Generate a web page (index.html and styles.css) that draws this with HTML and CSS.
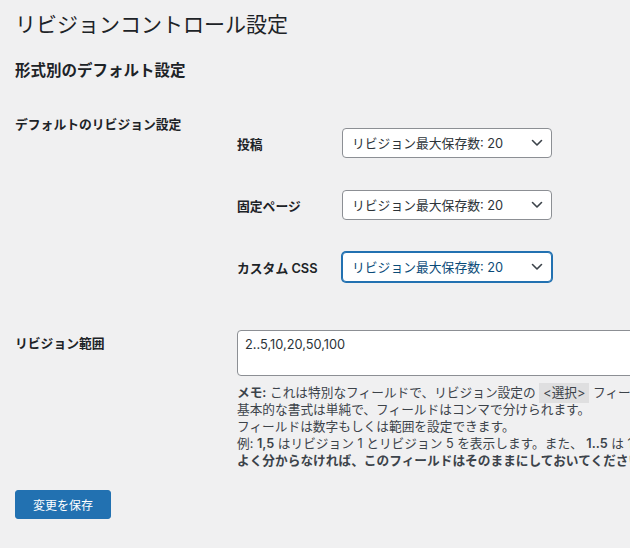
FILE: index.html
```html
<!DOCTYPE html>
<html lang="ja">
<head>
    <meta charset="UTF-8">
    <meta name="viewport" content="width=device-width, initial-scale=1.0">
    <title>リビジョンコントロール設定</title>
    <link rel="stylesheet" href="styles.css">
</head>
<body>

    <div class="wrap">
        <h1>リビジョンコントロール設定</h1>
        <h2>形式別のデフォルト設定</h2>

        <!-- Default revision settings per post type -->
        <div class="form-row defaults">
            <div class="row-label">デフォルトのリビジョン設定</div>
            <div class="type-list">
                <div class="type-row">
                    <div class="type-label">投稿</div>
                    <div class="select-box">
                        <select class="rev-select">
                            <option>リビジョン最大保存数: 20</option>
                        </select>
                        <svg class="chevron" width="12" height="8" viewBox="0 0 12 8"><path d="M1.5 1.5 6 6l4.5-4.5" fill="none" stroke="#3c434a" stroke-width="1.6" stroke-linecap="round" stroke-linejoin="round"/></svg>
                    </div>
                </div>
                <div class="type-row">
                    <div class="type-label">固定ページ</div>
                    <div class="select-box">
                        <select class="rev-select">
                            <option>リビジョン最大保存数: 20</option>
                        </select>
                        <svg class="chevron" width="12" height="8" viewBox="0 0 12 8"><path d="M1.5 1.5 6 6l4.5-4.5" fill="none" stroke="#3c434a" stroke-width="1.6" stroke-linecap="round" stroke-linejoin="round"/></svg>
                    </div>
                </div>
                <div class="type-row">
                    <div class="type-label">カスタム CSS</div>
                    <div class="select-box">
                        <select class="rev-select is-focus">
                            <option>リビジョン最大保存数: 20</option>
                        </select>
                        <svg class="chevron" width="12" height="8" viewBox="0 0 12 8"><path d="M1.5 1.5 6 6l4.5-4.5" fill="none" stroke="#3c434a" stroke-width="1.6" stroke-linecap="round" stroke-linejoin="round"/></svg>
                    </div>
                </div>
            </div>
        </div>

        <!-- Revision range -->
        <div class="form-row range">
            <div class="row-label range-label">リビジョン範囲</div>
            <div class="range-field">
                <textarea class="range-input">2..5,10,20,50,100</textarea>
                <p class="description">
                    <strong>メモ:</strong> これは特別なフィールドで、リビジョン設定の <code>&lt;選択&gt;</code> フィールドに表示される内容を制御します。<br>
                    基本的な書式は単純で、フィールドはコンマで分けられます。<br>
                    フィールドは数字もしくは範囲を設定できます。<br>
                    例: <strong>1,5</strong> はリビジョン 1 とリビジョン 5 を表示します。また、 <strong>1..5</strong> は 1 から 5 までのリビジョンを表示します。<br>
                    <strong>よく分からなければ、このフィールドはそのままにしておいてください。</strong>
                </p>
            </div>
        </div>

        <button class="button-primary">変更を保存</button>
    </div>

</body>
</html>
```

FILE: styles.css
```css
body {
    margin: 0;
    background-color: #f0f0f1;
    color: #1d2327;
    font-family: Inter, "Noto Sans CJK JP", sans-serif;
    font-size: 12px;
    overflow: hidden;
}

.wrap {
    width: 1000px;
    padding-left: 15px;
}

h1 {
    font-size: 21px;
    font-weight: 400;
    line-height: 27px;
    margin: 0;
    padding-top: 11px;
}

h2 {
    font-size: 15.5px;
    font-weight: 600;
    line-height: 20px;
    margin: 23px 0 0;
}

.form-row {
    display: grid;
    grid-template-columns: 222px 1fr;
}

.defaults {
    margin-top: 31px;
}

.row-label {
    font-size: 12.8px;
    font-weight: 600;
    line-height: 18px;
    padding-top: 3.5px;
}

.type-row {
    display: grid;
    grid-template-columns: 105px 210px;
    align-items: center;
    height: 62px;
}

.type-label {
    font-size: 12.8px;
    font-weight: 600;
}

.select-box {
    position: relative;
    height: 30px;
}

.rev-select {
    appearance: none;
    -webkit-appearance: none;
    width: 210px;
    height: 30px;
    padding: 0 24px 0 9px;
    border: 1px solid #8c8f94;
    border-radius: 4px;
    background-color: #fff;
    color: #2c3338;
    font-family: Inter, "Noto Sans CJK JP", sans-serif;
    font-size: 12.8px;
}

.rev-select.is-focus {
    border-color: #2271b1;
    box-shadow: 0 0 0 1px #2271b1;
    color: #0a4b78;
}

.chevron {
    position: absolute;
    right: 9px;
    top: 11px;
    pointer-events: none;
}

.range {
    margin-top: 32px;
}

.range-label {
    padding-top: 5px;
}

.range-input {
    display: block;
    box-sizing: border-box;
    width: 100%;
    height: 46px;
    margin: 0;
    padding: 5px 7px;
    border: 1px solid #8c8f94;
    border-radius: 4px;
    background-color: #fff;
    color: #2c3338;
    font-family: Inter, "Noto Sans CJK JP", sans-serif;
    font-size: 12.8px;
    line-height: 17px;
    resize: none;
}

.description {
    margin: 7.5px 0 0;
    color: #3c434a;
    font-size: 12.7px;
    line-height: 17px;
    white-space: nowrap;
}

.description strong {
    font-weight: 600;
}

.description code {
    background-color: rgba(0, 0, 0, 0.07);
    padding: 2px 4px 3px;
    font-family: Inter, "Noto Sans CJK JP", sans-serif;
    font-size: 12.7px;
}

.button-primary {
    display: block;
    margin-top: 21.5px;
    height: 29px;
    padding: 0 17px;
    border: 1px solid #2271b1;
    border-radius: 3px;
    background-color: #2271b1;
    color: #fff;
    font-family: Inter, "Noto Sans CJK JP", sans-serif;
    font-size: 12px;
    cursor: pointer;
}
```
